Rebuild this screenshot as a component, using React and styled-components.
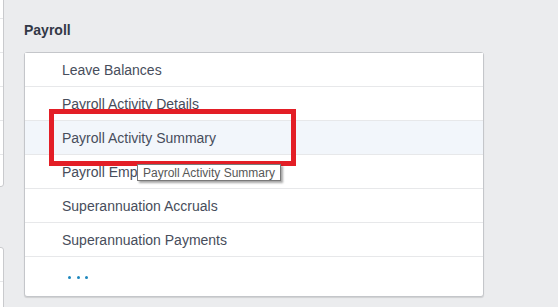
import React from 'react';
import styled, { createGlobalStyle } from 'styled-components';

const GlobalStyle = createGlobalStyle`
  html, body {
    margin: 0;
    padding: 0;
    background: #ebecee;
    font-family: 'Liberation Sans', Arial, sans-serif;
  }
`;

const reports = [
  'Leave Balances',
  'Payroll Activity Details',
  'Payroll Activity Summary',
  'Payroll Employee Summary',
  'Superannuation Accruals',
  'Superannuation Payments',
];

const App = () => {
  return (
    <>
      <GlobalStyle />
      <Page>
        <LeftRail>
          <SideCard>
            {[0, 1, 2, 3, 4, 5].map((i) => (
              <SideRow key={i} />
            ))}
          </SideCard>
          <SideCard $lower>
            <SideRow />
            <SideRow />
          </SideCard>
        </LeftRail>
        <Main>
          <Heading>Payroll</Heading>
          <Card>
            {reports.map((name, i) => (
              <Row key={name} $active={i === 2}>
                {i === 3 ? 'Payroll Emp' : name}
              </Row>
            ))}
            <MoreRow>
              <Dot />
              <Dot />
              <Dot />
            </MoreRow>
            <Highlight />
            <Tooltip>Payroll Activity Summary</Tooltip>
          </Card>
        </Main>
      </Page>
    </>
  );
};

export default App;

const Page = styled.div`
  display: flex;
  height: 307px;
  overflow: hidden;
`;

const LeftRail = styled.div`
  width: 4px;
  flex-shrink: 0;
  overflow: hidden;
  display: flex;
  flex-direction: column;
`;

const SideCard = styled.div`
  flex-shrink: 0;
  width: 300px;
  margin-left: -296px;
  margin-top: ${(p) => (p.$lower ? '60px' : '-16px')};
  background: #fff;
  border: 1px solid #c9cacd;
  border-radius: 3px;
  box-sizing: border-box;
`;

const SideRow = styled.div`
  height: 33px;
  border-bottom: 1px solid #e6e7e9;

  &:last-child {
    border-bottom: none;
    height: 31px;
  }
`;

const Main = styled.div`
  padding-left: 20px;
  display: flex;
  flex-direction: column;
`;

const Heading = styled.h2`
  margin: 0;
  padding: 22px 0 14px;
  font-size: 14px;
  line-height: 16px;
  font-weight: 700;
  color: #323846;
`;

const Card = styled.div`
  position: relative;
  width: 460px;
  background: #fff;
  border: 1px solid #c4c6ca;
  border-radius: 3px;
  box-shadow: 0 1px 1px rgba(0, 0, 0, 0.12);
  box-sizing: border-box;
`;

const Row = styled.div`
  height: 33px;
  display: flex;
  align-items: center;
  padding-left: 37px;
  border-bottom: 1px solid #e7e8ea;
  background: ${(p) => (p.$active ? '#f2f6fb' : '#fff')};
  font-size: 14px;
  color: #474d5b;
  white-space: nowrap;
`;

const MoreRow = styled.div`
  height: 39px;
  display: flex;
  align-items: center;
  gap: 5.5px;
  padding-left: 43px;
  padding-top: 2px;
  box-sizing: border-box;
`;

const Dot = styled.span`
  width: 3px;
  height: 3px;
  border-radius: 50%;
  background: #1d87bd;
`;

const Highlight = styled.div`
  position: absolute;
  left: 24px;
  top: 56px;
  width: 247px;
  height: 57px;
  border: 5px solid #e31e26;
  box-sizing: border-box;
  pointer-events: none;
`;

const Tooltip = styled.div`
  position: absolute;
  left: 112px;
  top: 111px;
  height: 17px;
  padding: 0 5px;
  display: flex;
  align-items: center;
  background: #fff;
  border: 1px solid #7a7a7a;
  box-shadow: 2px 2px 2px rgba(0, 0, 0, 0.35);
  font-size: 12px;
  color: #575757;
  white-space: nowrap;
  box-sizing: border-box;
`;
